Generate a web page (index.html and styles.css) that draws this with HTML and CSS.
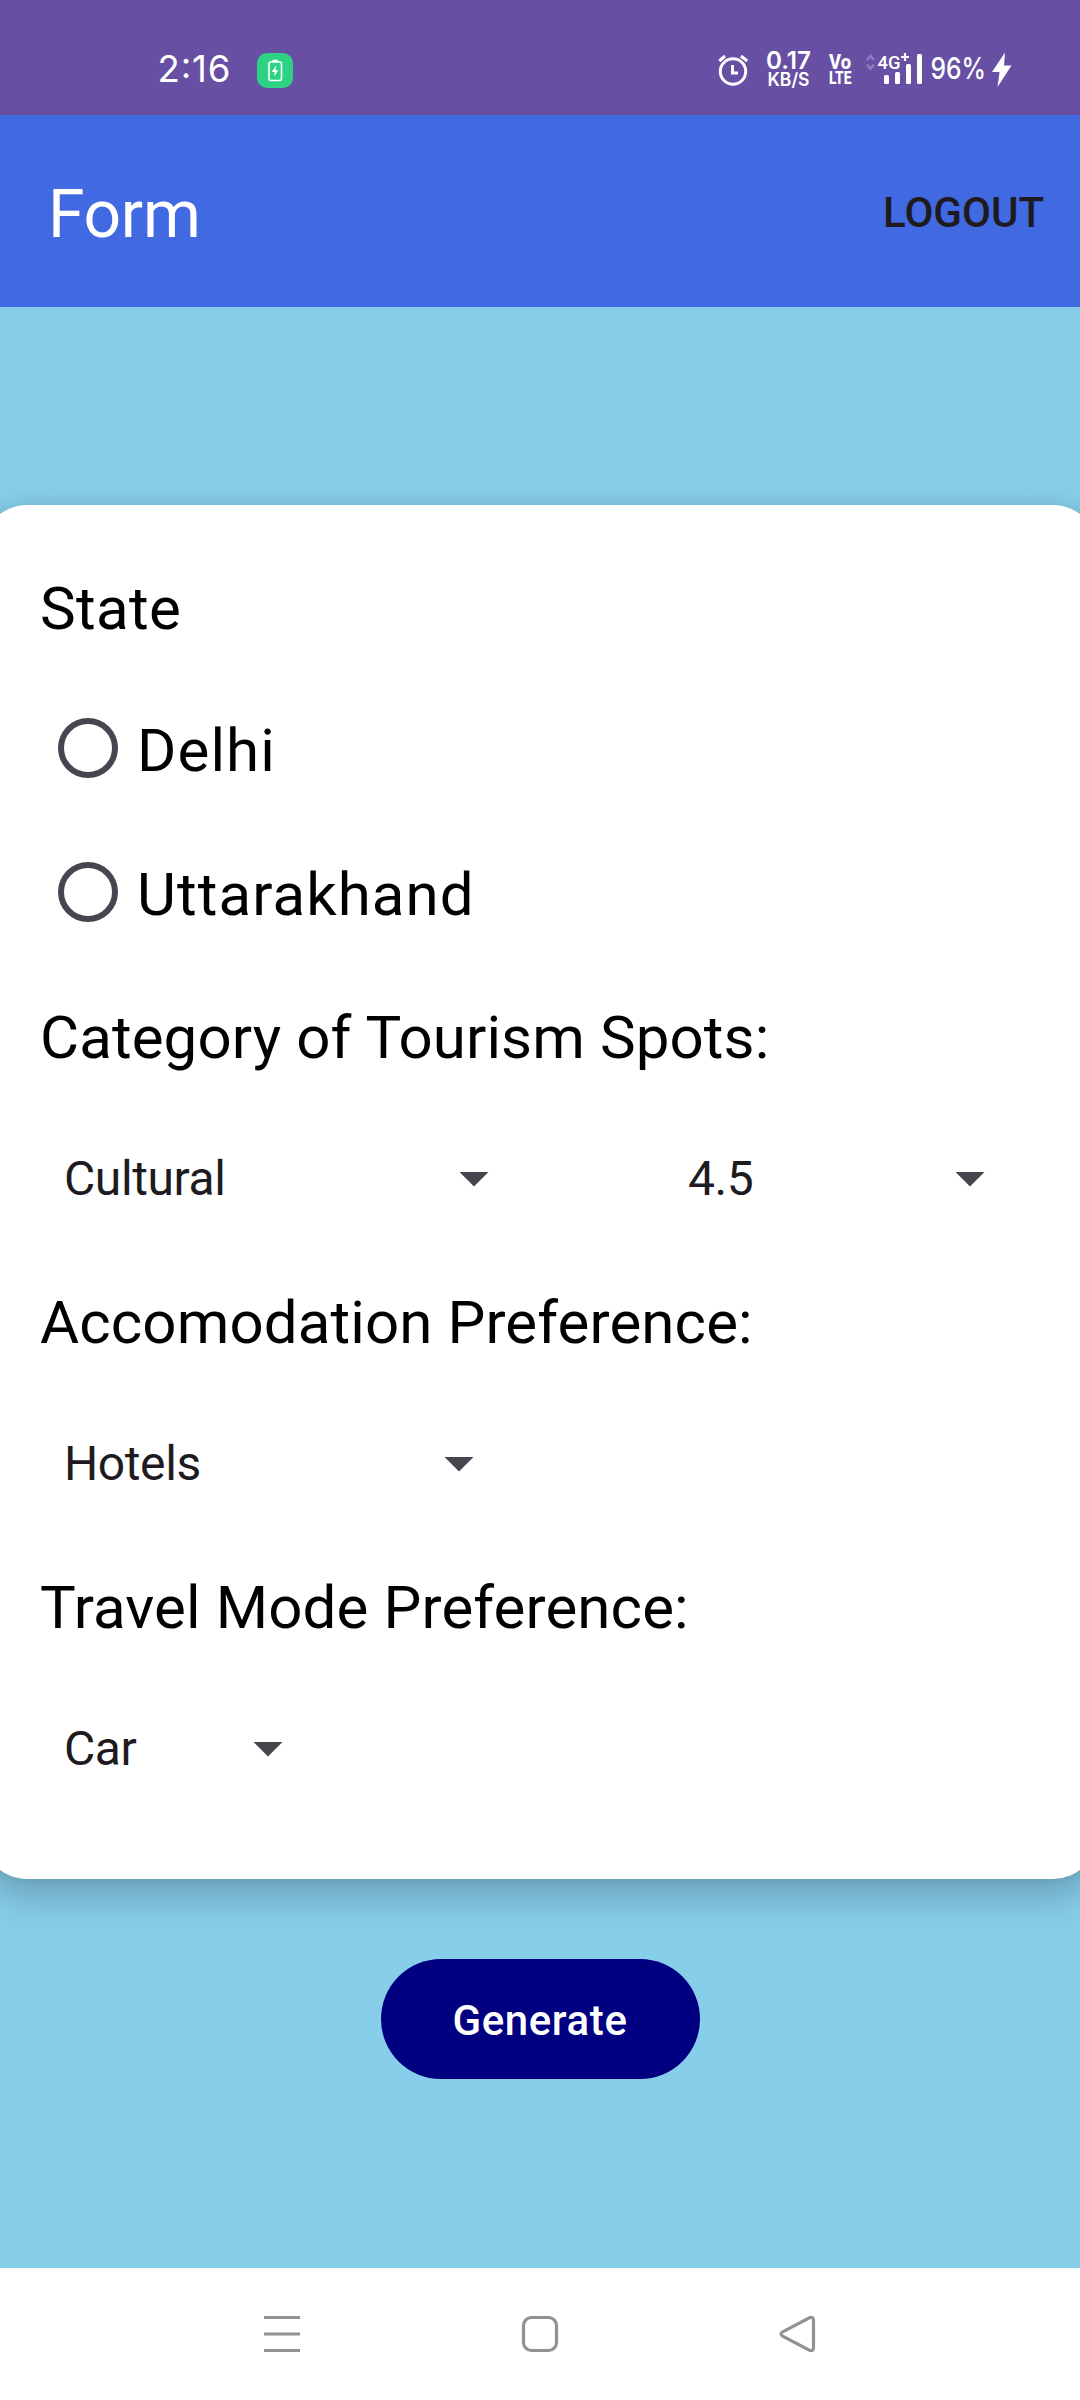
FILE: index.html
```html
<!DOCTYPE html>
<html lang="en">
<head>
<meta charset="utf-8">
<title>Form</title>
<link rel="stylesheet" href="styles.css">
</head>
<body>
<div class="screen">
  <div class="status">
    <svg class="clock" width="74" height="60" viewBox="158 40 74 60"><text x="157.500" y="82" font-size="36.5" textLength="73">2:16</text></svg>
    <svg class="charge" width="36" height="35" viewBox="0 0 36 35">
      <rect width="36" height="35" rx="10" fill="#2dd284"/>
      <rect x="12" y="9" width="12.500" height="18.500" rx="2" fill="none" stroke="#fff" stroke-width="1.600"/>
      <rect x="15.500" y="6.800" width="5.500" height="2.500" rx="1" fill="#fff"/>
      <path d="M19.200 12.500l-4.500 6.500h3l-.6 4.500 4.300-6.300h-3z" fill="#fff"/>
    </svg>
    <svg class="alarm" width="32" height="36" viewBox="717 51 32 36" fill="none" stroke="#fff" stroke-width="3">
      <circle cx="733" cy="70.500" r="12.700"/>
      <path d="M732.500 64v8H738M719.300 60l5.700-5M741 55l6.200 5"/>
    </svg>
    <svg class="speed" width="46" height="60" viewBox="766 40 46 60">
      <text x="766" y="69" font-size="24.500" font-weight="600" textLength="45" lengthAdjust="spacingAndGlyphs">0.17</text>
      <text x="767.500" y="86" font-size="18" font-weight="600" textLength="42" lengthAdjust="spacingAndGlyphs">KB/S</text>
    </svg>
    <svg class="volte" width="24" height="60" viewBox="828 40 24 60">
      <text x="829" y="69" font-size="19.500" font-weight="800" textLength="22" lengthAdjust="spacingAndGlyphs">Vo</text>
      <text x="829" y="84" font-size="19" font-weight="800" textLength="22.500" lengthAdjust="spacingAndGlyphs">LTE</text>
    </svg>
    <svg class="signal" width="58" height="60" viewBox="865 40 58 60">
      <path d="M867 60l3.500-4 3.500 4M867 64.500l3.500 4 3.500-4" fill="none" stroke="#8f7cbd" stroke-width="2.500"/>
      <text x="877.500" y="69" font-size="18.500" font-weight="500" textLength="23" lengthAdjust="spacingAndGlyphs">4G</text>
      <path d="M901 57h8M905 53v8" stroke="#fff" stroke-width="2.200"/>
      <g fill="#fff">
        <rect x="884" y="75" width="5" height="9" rx="1.500"/>
        <rect x="895" y="72" width="5" height="12" rx="1.500"/>
        <rect x="906" y="64" width="5" height="20" rx="1.500"/>
        <rect x="917" y="54" width="5" height="30" rx="1.500"/>
      </g>
    </svg>
    <svg class="percent" width="58" height="60" viewBox="929 40 58 60"><text x="930.500" y="78.500" font-size="29.500" font-weight="500" textLength="55.500" lengthAdjust="spacingAndGlyphs">96%</text></svg>
    <svg class="bolt" width="20" height="36" viewBox="0 0 20 36"><path d="M13 .5L0 20h7.500L5.500 35 19.500 13.500H12z" fill="#fff"/></svg>
  </div>

  <header class="appbar">
    <div class="title">Form</div>
    <div class="logout">LOGOUT</div>
  </header>

  <main class="content">
    <section class="card">
      <div class="label state">State</div>
      <div class="radio"><span class="ring"></span><span class="radio-text">Delhi</span></div>
      <div class="radio"><span class="ring"></span><span class="radio-text">Uttarakhand</span></div>
      <div class="label category">Category of Tourism Spots:</div>
      <div class="row">
        <div class="spinner culture"><span>Cultural</span><i class="arrow"></i></div>
        <div class="spinner rating"><span>4.5</span><i class="arrow"></i></div>
      </div>
      <div class="label">Accomodation Preference:</div>
      <div class="row">
        <div class="spinner stay"><span>Hotels</span><i class="arrow"></i></div>
      </div>
      <div class="label">Travel Mode Preference:</div>
      <div class="row">
        <div class="spinner travel"><span>Car</span><i class="arrow"></i></div>
      </div>
    </section>
    <button class="generate">Generate</button>
  </main>

  <nav class="nav">
    <svg width="40" height="40" viewBox="0 0 40 40"><path d="M2 3.500h36M2 20h36M2 36.500h36"/></svg>
    <svg width="40" height="40" viewBox="0 0 40 40"><rect x="3.500" y="3.500" width="33" height="33" rx="8"/></svg>
    <svg width="40" height="40" viewBox="0 0 40 40"><path d="M4.600 17.800L31.500 3.800Q35.300 2.500 35.500 6V34Q35.300 37.500 31.500 36.200L4.600 22.200Q1.500 20 4.600 17.800Z"/></svg>
  </nav>
</div>
</body>
</html>
```
FILE: styles.css
```css
* { box-sizing: border-box; }
body { margin: 0; font-family: Roboto, sans-serif; }
.screen {
  width: 1080px;
  height: 2400px;
  display: flex;
  flex-direction: column;
  overflow: hidden;
  background: #87ceeb;
}
.status {
  height: 115px;
  padding: 25px 68px 0 158px;
  display: flex;
  align-items: center;
  background: #6750a4;
}
.status svg { flex: none; overflow: visible; }
.status text { fill: #fff; font-family: Inter, sans-serif; }
.status .volte text, .status .signal text { font-family: Roboto, sans-serif; }
.charge { margin-left: 25px; }
.alarm { margin-left: 424px; }
.speed { margin-left: 17px; }
.volte { margin-left: 16px; }
.signal { margin-left: 13px; }
.percent { margin-left: 6px; }
.bolt { margin-left: 5px; }

.appbar {
  height: 192px;
  padding: 0 36px 0 48px;
  display: flex;
  align-items: center;
  justify-content: space-between;
  background: #4169e1;
  color: #fff;
}
.title { font-size: 66px; letter-spacing: -.3px; padding-top: 6px; }
.logout { font-size: 42px; font-weight: 500; color: #1d1b20; padding-top: 3px; }

.content {
  height: 1961px;
  padding-top: 198px;
  display: flex;
  flex-direction: column;
  align-items: center;
}
.card {
  width: 1116px;
  height: 1374px;
  flex: none;
  padding: 36px 58px 0;
  border-radius: 45px;
  background: #fff;
  box-shadow: 0 16px 40px rgba(0, 0, 0, .24), 0 0 14px rgba(0, 0, 0, .07);
}
.label {
  height: 141px;
  padding-top: 2px;
  display: flex;
  align-items: center;
  font-size: 60px;
  letter-spacing: .12px;
  white-space: nowrap;
  color: #000;
}
.state { height: 135px; padding-top: 0; letter-spacing: .4px; }
.category { height: 143px; padding-top: 4px; }
.radio {
  height: 144px;
  padding-left: 18px;
  display: flex;
  align-items: center;
  font-size: 60px;
  letter-spacing: 1.1px;
}
.ring {
  width: 60px;
  height: 60px;
  border: 6px solid #49454f;
  border-radius: 50%;
}
.radio-text { margin-left: 19px; padding-top: 5px; }
.row { height: 144px; display: flex; }
.spinner {
  display: flex;
  align-items: center;
  justify-content: space-between;
  padding-left: 24px;
  font-size: 48px;
  letter-spacing: -.4px;
  color: #1d1b20;
}
.spinner span { margin-top: -1px; }
.arrow {
  width: 30px;
  height: 15px;
  background: #49454f;
  clip-path: polygon(0 0, 100% 0, 50% 100%);
}
.culture { width: 449px; }
.rating { width: 496px; padding-left: 199px; }
.stay { width: 434px; }
.travel { width: 243px; }

.generate {
  width: 319px;
  height: 120px;
  flex: none;
  margin-top: 80px;
  padding: 3px 0 0;
  border: 0;
  border-radius: 60px;
  background: #000080;
  color: #fff;
  font: 500 42px Roboto, sans-serif;
  letter-spacing: .6px;
}

.nav {
  height: 132px;
  padding: 0 262px;
  display: flex;
  align-items: center;
  justify-content: space-between;
  background: #fff;
}
.nav svg { fill: none; stroke: #929292; stroke-width: 3.2px; }
```
